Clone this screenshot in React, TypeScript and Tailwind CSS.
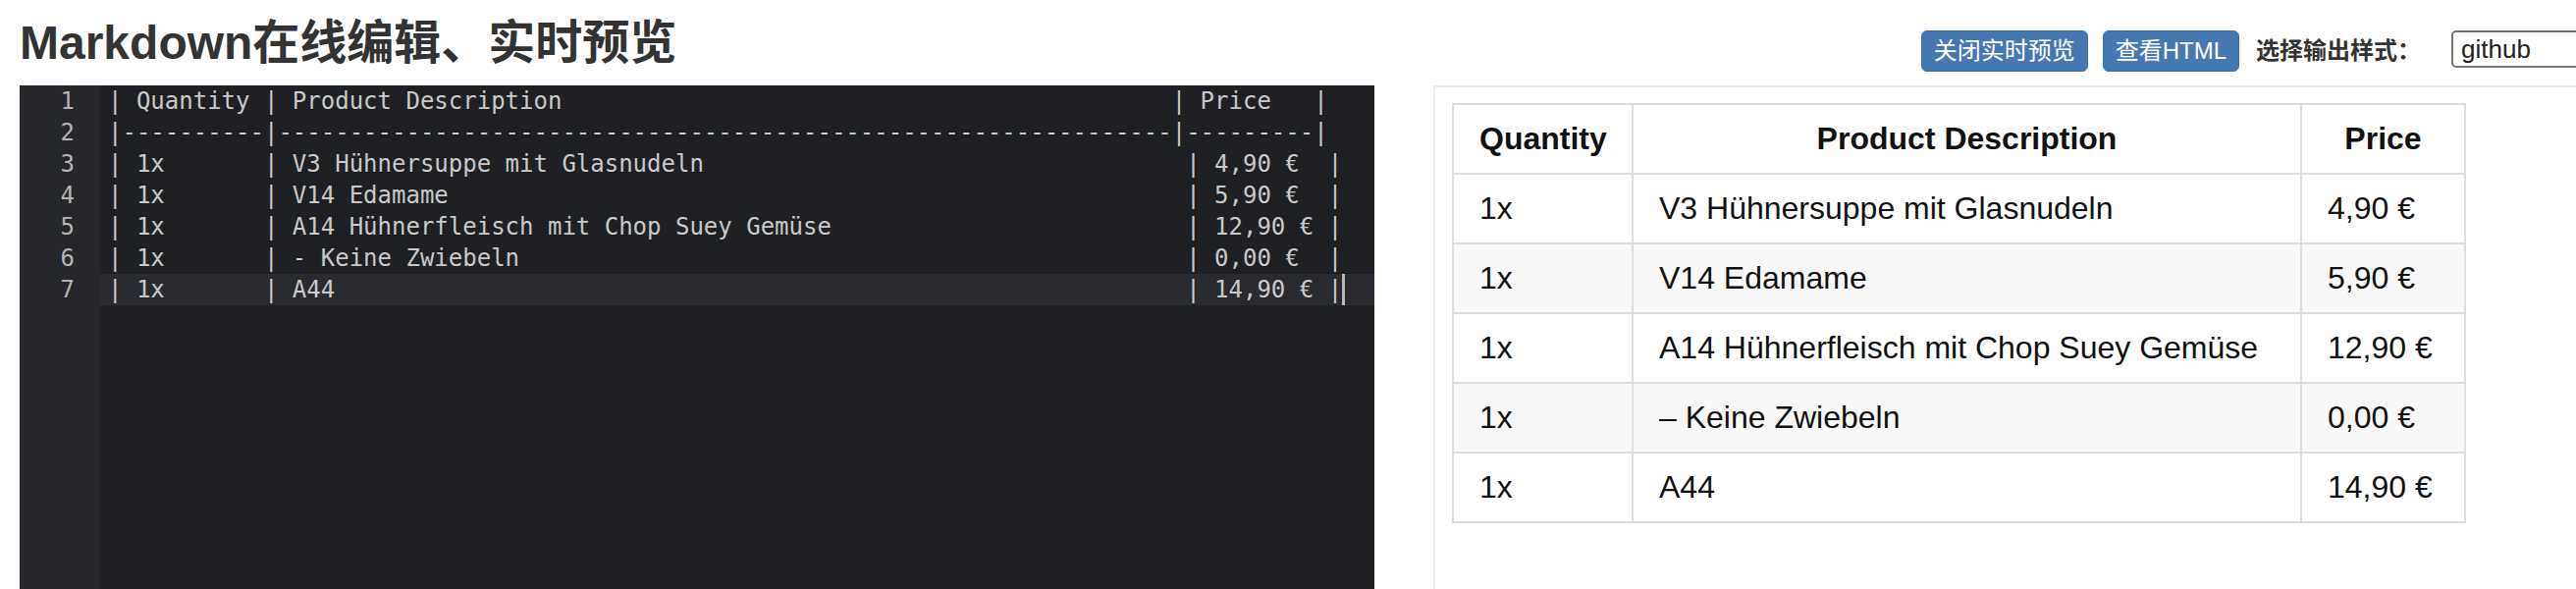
import React from 'react';

const rows = [
  { qty: '1x', desc: 'V3 Hühnersuppe mit Glasnudeln', price: '4,90 €' },
  { qty: '1x', desc: 'V14 Edamame', price: '5,90 €' },
  { qty: '1x', desc: 'A14 Hühnerfleisch mit Chop Suey Gemüse', price: '12,90 €' },
  { qty: '1x', desc: '- Keine Zwiebeln', price: '0,00 €' },
  { qty: '1x', desc: 'A44', price: '14,90 €' },
];

// markdown source as typed in the editor
const sourceLines = [
  `| ${'Quantity'.padEnd(9)}| ${'Product Description'.padEnd(62)}| ${'Price'.padEnd(8)}|`,
  `|${'-'.repeat(10)}|${'-'.repeat(63)}|${'-'.repeat(9)}|`,
  ...rows.map(r => `| ${r.qty.padEnd(9)}| ${r.desc.padEnd(63)}| ${r.price.padEnd(8)}|`),
];

const sans = "font-['Liberation_Sans','Noto_Sans_CJK_SC',sans-serif]";

const Editor: React.FC = () => {
  const activeLine = sourceLines.length - 1;
  return (
    <div className="w-[1380px] h-[540px] shrink-0 flex bg-[#1f2023] font-['DejaVu_Sans_Mono',monospace] text-[24px] leading-[32px]">
      {/* Gutter */}
      <div className="w-[82px] shrink-0 bg-[#26272b] text-[#b4b4b4] text-right pr-[26px]">
        {sourceLines.map((_, i) => (
          <div key={i} className="h-[32px]">{i + 1}</div>
        ))}
      </div>
      {/* Lines */}
      <div className="flex-1">
        {sourceLines.map((line, i) => (
          <div
            key={i}
            className={`h-[32px] pl-[8px] whitespace-pre text-[#c9c9c9] ${i === activeLine ? 'bg-[#2a2b30]' : ''}`}
          >
            {line}
            {i === activeLine && (
              <span className="inline-block w-[3px] h-[32px] align-top bg-[#b8b8b8]" />
            )}
          </div>
        ))}
      </div>
    </div>
  );
};

const Preview: React.FC = () => (
  <div className="w-[1300px] h-[540px] shrink-0 border-l-2 border-t-2 border-[#ececec] pt-[16px] pl-[17px]">
    <table className={`table-fixed border-collapse w-[1031px] text-[32px] leading-[47px] text-[#111] ${sans}`}>
      <colgroup>
        <col className="w-[183px]" />
        <col className="w-[681px]" />
        <col className="w-[167px]" />
      </colgroup>
      <thead>
        <tr className="bg-white">
          {['Quantity', 'Product Description', 'Price'].map(h => (
            <th key={h} className="border-2 border-[#dddddd] px-[26px] py-[11px] font-bold text-center whitespace-nowrap">
              {h}
            </th>
          ))}
        </tr>
      </thead>
      <tbody>
        {rows.map((r, i) => (
          <tr key={i} className={i % 2 === 1 ? 'bg-[#f8f8f8]' : 'bg-white'}>
            <td className="border-2 border-[#dddddd] px-[26px] py-[11px] whitespace-nowrap">{r.qty}</td>
            <td className="border-2 border-[#dddddd] px-[26px] py-[11px] whitespace-nowrap">
              {r.desc.replace(/^- /, '– ')}
            </td>
            <td className="border-2 border-[#dddddd] px-[26px] py-[11px] whitespace-nowrap">{r.price}</td>
          </tr>
        ))}
      </tbody>
    </table>
  </div>
);

export default function App() {
  return (
    <div className="w-full h-[600px] overflow-hidden bg-white">
      <div className={`w-[2657px] ${sans}`}>
        {/* Header */}
        <div className="h-[87px] flex">
          <h1 className="pl-[20px] pt-[20px] text-[48px] leading-[48px] font-bold text-[#333]">
            Markdown在线编辑、实时预览
          </h1>
          <div className="flex-1" />
          <div className="flex items-center h-[42px] mt-[31px]">
            <button className="h-[42px] px-[12px] rounded-[6px] bg-[#4679b2] border border-[#3f6ea3] text-white text-[24px]">
              关闭实时预览
            </button>
            <button className="ml-[15px] h-[42px] px-[12px] rounded-[6px] bg-[#4679b2] border border-[#3f6ea3] text-white text-[24px]">
              查看HTML
            </button>
            <span className="ml-[17px] text-[24px] font-bold text-[#333]">选择输出样式：</span>
            <div className="ml-[31px] w-[160px] h-[38px] -mt-[4px] border-2 border-[#767676] rounded-[5px] pl-[8px] flex items-center text-[26px] text-[#222]">
              github
            </div>
          </div>
        </div>

        {/* Body */}
        <div className="flex pl-[20px]">
          <Editor />
          <div className="ml-[60px] shrink-0">
            <Preview />
          </div>
        </div>
      </div>
    </div>
  );
}
